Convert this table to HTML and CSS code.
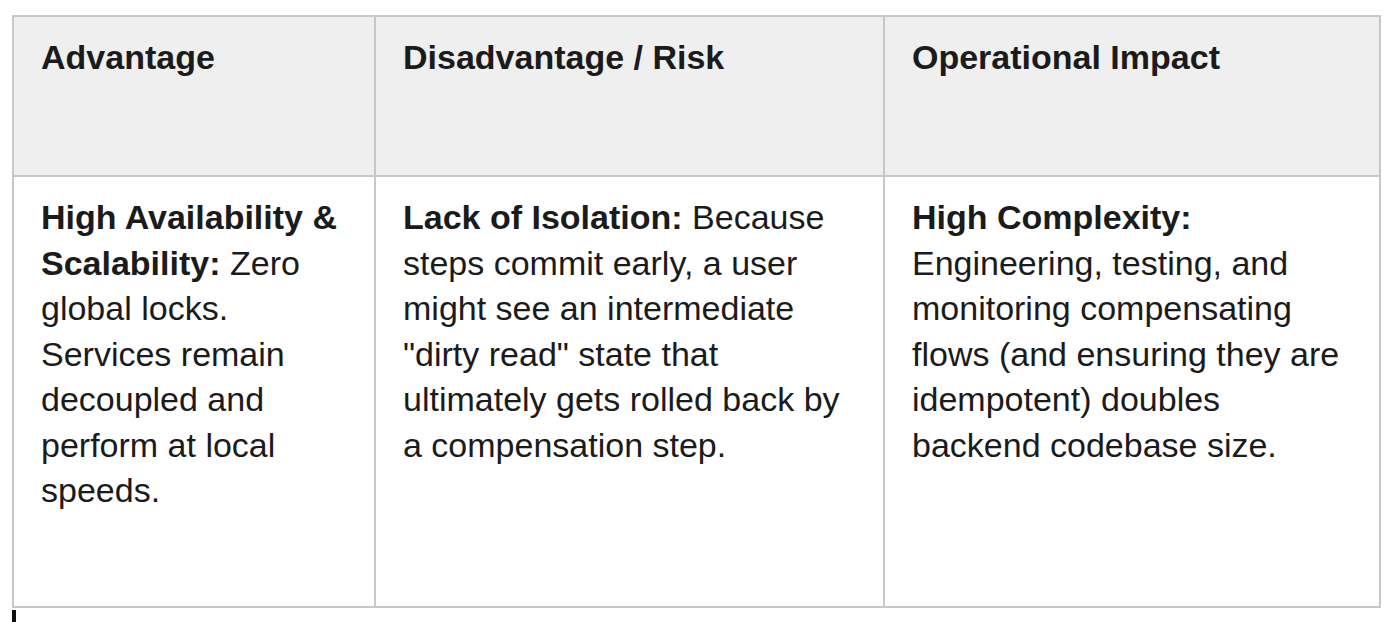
FILE: index.html
```html
<!DOCTYPE html>
<html lang="en">
<head>
<meta charset="utf-8">
<title>Saga trade-offs</title>
<link rel="stylesheet" href="styles.css">
</head>
<body>
<div class="table">
  <div class="cell head">Advantage</div>
  <div class="cell head">Disadvantage / Risk</div>
  <div class="cell head">Operational Impact</div>
  <div class="cell"><strong>High Availability &amp; Scalability:</strong> Zero global locks. Services remain decoupled and perform at local speeds.</div>
  <div class="cell"><strong>Lack of Isolation:</strong> Because steps commit early, a user might see an intermediate "dirty read" state that ultimately gets rolled back by a compensation step.</div>
  <div class="cell"><strong>High Complexity:</strong> Engineering, testing, and monitoring compensating flows (and ensuring they are idempotent) doubles backend codebase size.</div>
</div>
<div class="caret"></div>
</body>
</html>
```

FILE: styles.css
```css
html, body {
  margin: 0;
  padding: 0;
  background: #ffffff;
}

body {
  padding: 15px 0 0 12px;
  font-family: "Liberation Sans", Arial, Helvetica, sans-serif;
  color: #1b1b1b;
  font-size: 34px;
  line-height: 45.5px;
}

.table {
  display: grid;
  grid-template-columns: 362px 509px 496px;
  grid-template-rows: 160px 431px;
  width: max-content;
  border-top: 2px solid #c7c9c9;
  border-left: 2px solid #c7c9c9;
}

.cell {
  box-sizing: border-box;
  border-right: 2px solid #c7c9c9;
  border-bottom: 2px solid #c7c9c9;
  padding: 18px 24px 0 27px;
}

.head {
  background: #efefef;
  font-weight: bold;
}

strong {
  font-weight: bold;
}

.caret {
  width: 4px;
  height: 14px;
  margin-top: 2px;
  background: #111111;
}
```
